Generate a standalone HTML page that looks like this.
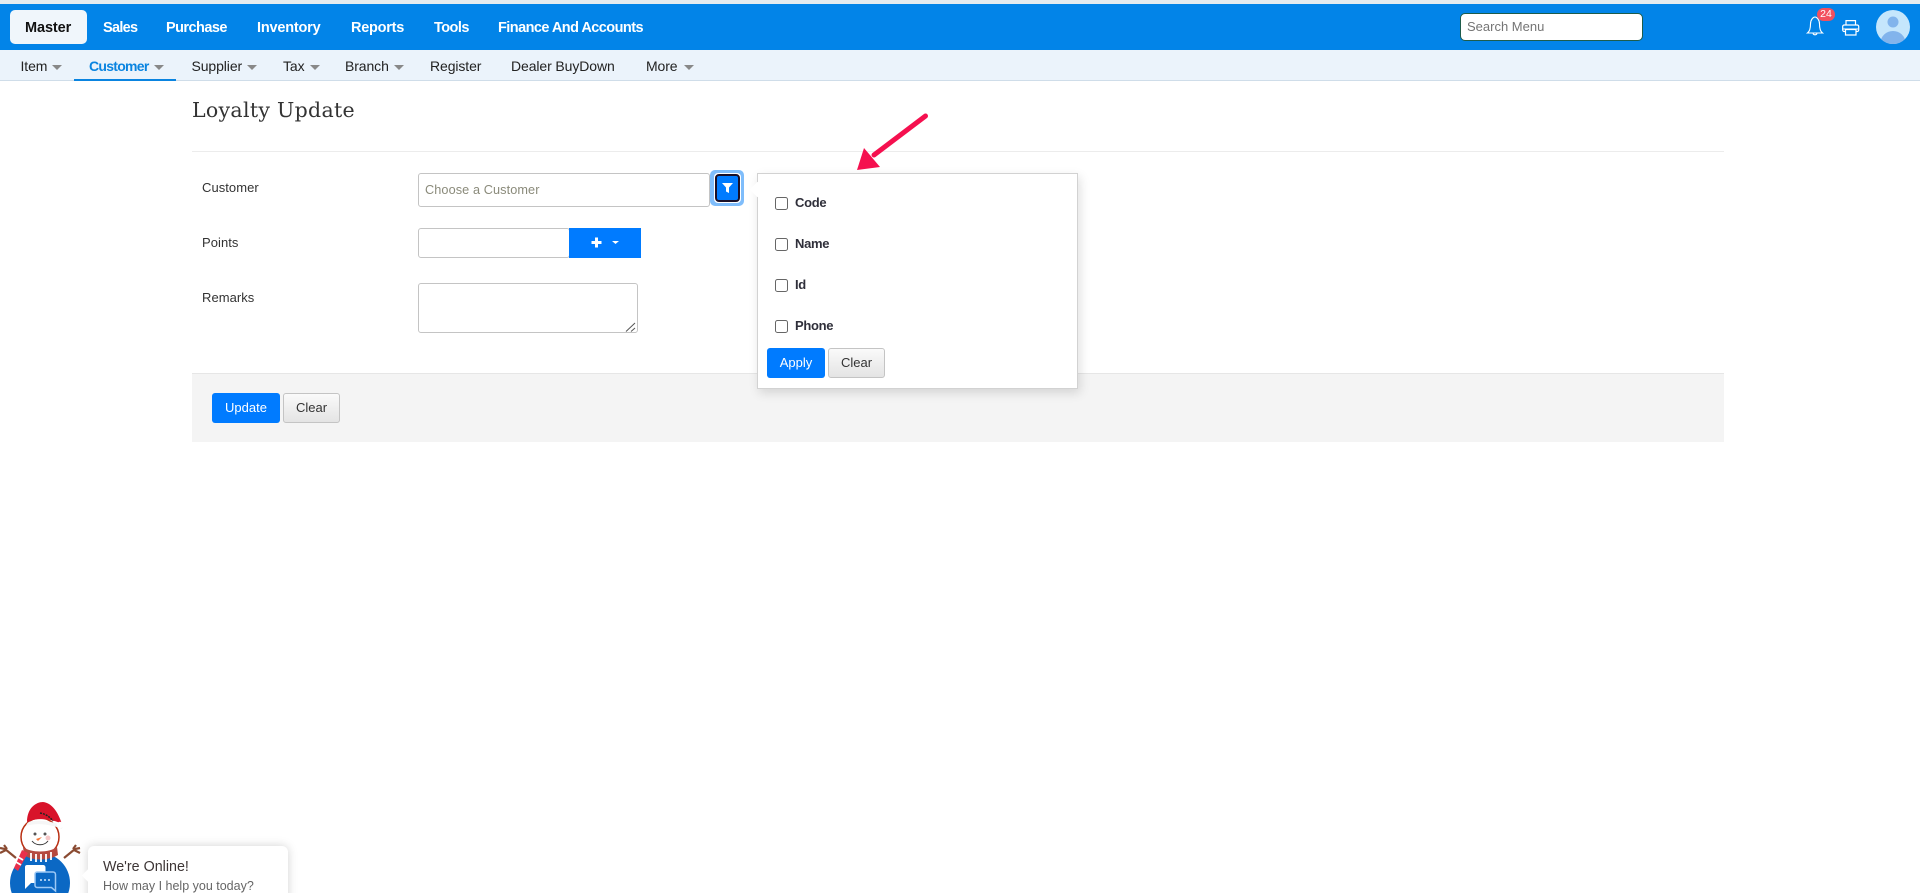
<!DOCTYPE html>
<html><head><meta charset="utf-8"><title>Loyalty Update</title>
<style>
html,body{margin:0;padding:0;width:1920px;height:893px;overflow:hidden;background:#fff;font-family:"Liberation Sans",sans-serif;color:#333}
body{position:relative}
.a{position:absolute;white-space:nowrap;box-sizing:border-box}
.top{color:#fff;font-weight:bold;font-size:14.500px;letter-spacing:-.55px;top:18px;line-height:20px}
.sub{color:#222;font-size:14px;top:56px;line-height:20px;letter-spacing:-.1px}
.car{display:inline-block;width:0;height:0;border-left:5.500px solid transparent;border-right:5.500px solid transparent;border-top:5.500px solid #888;margin-left:5px;vertical-align:1px}
.lbl{font-size:13px;color:#333;left:202px;line-height:18px;letter-spacing:.05px}
.inp{border:1px solid #c4c4c4;background:#fff;border-radius:3px}
.chk{left:775px;width:13px;height:13px;border:1px solid #666;border-radius:2.500px;background:#fff}
.ck{left:795px;font-size:13px;font-weight:bold;color:#2f2f3a;line-height:16px;letter-spacing:-.3px}
.bb{background:#007bff;color:#fff;border-radius:3px;font-size:13px;text-align:center;line-height:30px;height:30px}
.bc{background:linear-gradient(#fafafa,#e4e4e4);border:1px solid #c4c4c4;color:#333;border-radius:3px;font-size:13px;text-align:center;line-height:28px;height:30px}
</style></head><body>
<div class="a" style="left:0;top:0;width:1920px;height:4px;background:#e4ebef"></div>
<div class="a" style="left:0;top:4px;width:1920px;height:46px;background:#0284e8"></div>
<div class="a" style="left:10px;top:10px;width:77px;height:34px;background:#f0f6fb;border-radius:5px"></div>
<div class="a top" style="left:25px;color:#111;letter-spacing:-.1px">Master</div>
<div class="a top" style="left:103px;letter-spacing:-.7px">Sales</div>
<div class="a top" style="left:166px">Purchase</div>
<div class="a top" style="left:257px;letter-spacing:-.2px">Inventory</div>
<div class="a top" style="left:351px;letter-spacing:-.25px">Reports</div>
<div class="a top" style="left:434px">Tools</div>
<div class="a top" style="left:498px">Finance And Accounts</div>
<div class="a" style="left:1460px;top:13px;width:183px;height:28px;background:#fff;border:1px solid #1d5c4a;border-radius:5px;color:#757575;font-size:13px;line-height:26px;padding-left:6px">Search Menu</div>
<svg class="a" style="left:1800px;top:8px" width="40" height="30" viewBox="0 0 40 30"><path d="M7.500 25c2-1.500 3-4 3-9 0-4 2.500-7 4.500-7s4.500 3 4.500 7c0 5 1 7.500 3 9z" fill="none" stroke="#fff" stroke-width="1.100"/><path d="M13 25.500a2.200 2.200 0 0 0 4 0" fill="none" stroke="#fff" stroke-width="1.100"/></svg>
<div class="a" style="left:1817px;top:8px;width:18px;height:13px;background:#f2505f;border-radius:7px;color:#fff;font-size:10.500px;line-height:13px;text-align:center">24</div>
<svg class="a" style="left:1842px;top:20px" width="18" height="16" viewBox="0 0 18 16" fill="none" stroke="#fff" stroke-width="1.200"><path d="M4 5V.6h9.500V5"/><rect x=".7" y="5" width="16" height="6.500" rx="1.500"/><path d="M3.500 9.500v5.500h10.500V9.500z" fill="#0284e8"/><path d="M1 9h15" stroke-width="1"/></svg>
<svg class="a" style="left:1876px;top:10px" width="34" height="34" viewBox="0 0 34 34"><defs><clipPath id="c"><circle cx="17" cy="17" r="17"/></clipPath></defs><circle cx="17" cy="17" r="17" fill="#c5e6fc"/><circle cx="17" cy="12" r="5.500" fill="#82b4ec"/><ellipse cx="17" cy="33" rx="12.500" ry="12" fill="#82b4ec" clip-path="url(#c)"/></svg>

<div class="a" style="left:0;top:50px;width:1920px;height:31px;background:#ebf3fb"></div>
<div class="a" style="left:0;top:80px;width:1920px;height:1px;background:#cfdde9"></div>
<div class="a sub" style="left:20.500px">Item<span class="car" style="margin-left:5px"></span></div>
<div class="a sub" style="left:89px;color:#0a84e0;font-weight:bold;letter-spacing:-.72px">Customer<span class="car"></span></div>
<div class="a" style="left:74px;top:79px;width:102px;height:2px;background:#0a84e0"></div>
<div class="a sub" style="left:191.500px">Supplier<span class="car"></span></div>
<div class="a sub" style="left:283px">Tax<span class="car"></span></div>
<div class="a sub" style="left:345px">Branch<span class="car"></span></div>
<div class="a sub" style="left:430px">Register</div>
<div class="a sub" style="left:511px">Dealer BuyDown</div>
<div class="a sub" style="left:646px">More<span class="car" style="margin-left:6px"></span></div>

<div class="a" style="left:192px;top:96px;font-family:'DejaVu Serif','Liberation Serif',serif;font-size:20.500px;line-height:28px;color:#333;letter-spacing:.3px">Loyalty Update</div>
<div class="a" style="left:192px;top:151px;width:1532px;height:1px;background:#ececec"></div>

<div class="a lbl" style="top:179px">Customer</div>
<div class="a inp" style="left:418px;top:173px;width:292px;height:34px;color:#8a8a7a;font-size:12.700px;line-height:32px;padding-left:6px;letter-spacing:.1px">Choose a Customer</div>
<div class="a" style="left:710px;top:170px;width:34px;height:36px;background:#7fbdfb;border-radius:5px"></div>
<div class="a" style="left:713.500px;top:173px;width:27px;height:30px;background:#fff;border-radius:4px"></div>
<div class="a" style="left:714.500px;top:174px;width:25px;height:28px;background:#007bff;border:2px solid #1a1028;border-radius:4px"></div>
<svg class="a" style="left:721.500px;top:183px" width="11" height="10" viewBox="0 0 11 10"><path d="M0 0h11L7 4.500V10L4 8.500V4.500z" fill="#fff"/></svg>

<div class="a lbl" style="top:234px">Points</div>
<div class="a inp" style="left:418px;top:228px;width:152px;height:30px"></div>
<div class="a" style="left:569px;top:228px;width:72px;height:30px;background:#007bff"></div>
<svg class="a" style="left:591px;top:237px" width="30" height="12" viewBox="0 0 30 12"><path d="M5.500 0.500v10M.5 5.500h10" stroke="#fff" stroke-width="3"/><path d="M21 4h7l-3.500 3z" fill="#fff"/></svg>

<div class="a lbl" style="top:289px">Remarks</div>
<div class="a inp" style="left:418px;top:283px;width:220px;height:50px"></div>
<svg class="a" style="left:624px;top:322px" width="12" height="10" viewBox="0 0 12 10"><path d="M2 9.500L11 1M7 9.500L11 6" stroke="#555" stroke-width="1"/></svg>

<div class="a" style="left:192px;top:372.500px;width:1532px;height:69.500px;background:#f4f4f4;border-top:1px solid #e6e6e6"></div>
<div class="a bb" style="left:212px;top:393px;width:68px">Update</div>
<div class="a bc" style="left:283px;top:393px;width:57px">Clear</div>

<div class="a" style="left:756.500px;top:173px;width:321.500px;height:216px;background:#fff;border:1px solid #d2d2d2;box-shadow:2px 4px 10px rgba(0,0,0,.13)"></div>
<div class="a" style="left:751.500px;top:184px;width:11px;height:11px;background:#fff;transform:rotate(45deg)"></div>
<div class="a chk" style="top:197px"></div><div class="a ck" style="top:195px">Code</div>
<div class="a chk" style="top:238px"></div><div class="a ck" style="top:236px">Name</div>
<div class="a chk" style="top:279px"></div><div class="a ck" style="top:277px">Id</div>
<div class="a chk" style="top:320px"></div><div class="a ck" style="top:318px">Phone</div>
<div class="a bb" style="left:767px;top:348px;width:58px">Apply</div>
<div class="a bc" style="left:828px;top:348px;width:57px">Clear</div>

<svg class="a" style="left:850px;top:108px" width="85" height="70" viewBox="0 0 85 70"><path d="M75.500 8L24 47" stroke="#f5104f" stroke-width="5" stroke-linecap="round" fill="none"/><path d="M7 62L14 40 30 59z" fill="#f5104f"/></svg>

<svg class="a" style="left:0;top:795px" width="90" height="98" viewBox="0 0 90 98">
<path d="M0 53l5 1 11 9M4 50l3 4M0 58l6-3M80 53l-5 1-11 9M76 50l-3 4M80 58l-6-3" stroke="#8a4b32" stroke-width="2.200" fill="none"/>
<circle cx="40" cy="88" r="30" fill="#0b68c4"/>
<circle cx="40" cy="42" r="19" fill="#fff" stroke="#b92f12" stroke-width="1.500"/>
<path d="M27 27c0-14 9-20 16-20 9 1 15 10 19 22-9-5-25-7-35-2z" fill="#d8132a"/>
<path d="M26 31c1-4 4-5 8-5 10-1 20 1 27 4 1 1 2 2 1 4-9-4-25-7-36-3z" fill="#f6f6f6"/>
<circle cx="60" cy="30" r="3.200" fill="#fff"/>
<path d="M40 18c6 1 10 4 13 8" stroke="#222" stroke-width="1.500" stroke-dasharray="2 1" fill="none"/>
<circle cx="35" cy="39" r="1.500" fill="#555"/><circle cx="45" cy="39" r="1.500" fill="#555"/>
<path d="M36 44l6-2-4 4z" fill="#f2773a"/><path d="M32 46c4 5 12 5 16 0" stroke="#333" stroke-width="1" fill="none"/>
<circle cx="48" cy="43" r="2.500" fill="#f6c7c7"/>
<path d="M23 52c8 6 26 6 34 0l1 8c-10 6-26 6-34 0z" fill="#b5493f"/>
<path d="M22 55l6 3-10 18-4-3z" fill="#e8304c"/>
<path d="M18 62l5 3M16 67l5 3M31 58v8M36 59v8M41 59v8M46 59v8M51 57v8" stroke="#fff" stroke-width="1.800"/>
<path d="M27 70h16c1.500 0 2.500 1 2.500 2.500V88H31l-6 6V72c0-1.500 1-2 2-2z" fill="#fff"/>
<path d="M37 77h16c1.500 0 2.500 1 2.500 2.500V96l-4-3.500H37c-1 0-2-1-2-2V79c0-1 1-2 2-2z" fill="#0b68c4" stroke="#9cc8f5" stroke-width="1.500"/>
<circle cx="41" cy="85" r="1" fill="#cfe5fb"/><circle cx="45" cy="85" r="1" fill="#cfe5fb"/><circle cx="49" cy="85" r="1" fill="#cfe5fb"/>
</svg>
<div class="a" style="left:88px;top:846px;width:200px;height:60px;background:#fff;border-radius:6px;box-shadow:0 0 10px rgba(0,0,0,.18)"></div>
<div class="a" style="left:84px;top:870px;width:11px;height:11px;background:#fff;transform:rotate(45deg)"></div>
<div class="a" style="left:103px;top:858px;font-size:14.300px;line-height:18px;color:#3d3535">We're Online!</div>
<div class="a" style="left:103px;top:877px;font-size:12.500px;line-height:18px;color:#666">How may I help you today?</div>
</body></html>
